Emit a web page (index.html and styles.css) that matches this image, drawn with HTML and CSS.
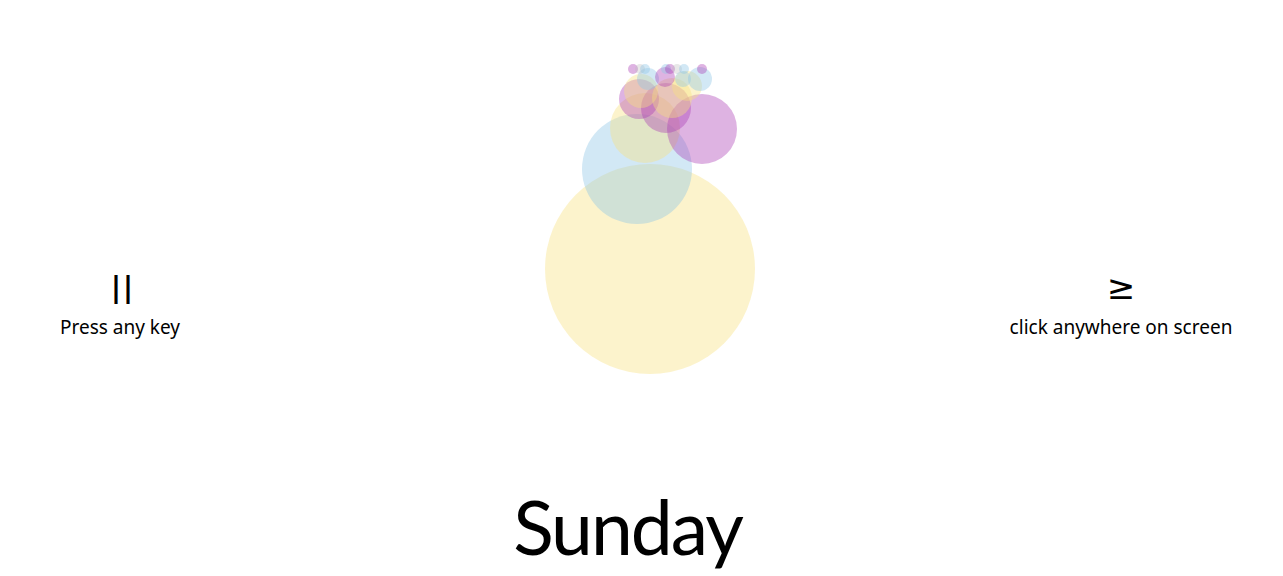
FILE: index.html
```html
<!DOCTYPE html>
<html>
<head>
<meta charset="utf-8">
<link rel="stylesheet" href="styles.css">
</head>
<body>
<main class="page">
  <section class="stage">
    <div class="side side-left">
      <div class="glyph pause">||</div>
      <div class="hint">Press any key</div>
    </div>
    <div class="canvas">
      <svg class="bubbles" viewBox="240 0 719 470" width="719" height="470" xmlns="http://www.w3.org/2000/svg">
        <g class="y"><circle cx="650" cy="269" r="105"/></g>
        <g class="b"><circle cx="637" cy="169" r="55"/></g>
        <g class="y"><circle cx="645" cy="128" r="35"/></g>
        <g class="p"><circle cx="702" cy="129" r="35"/></g>
        <g class="p"><circle cx="639" cy="99" r="20"/></g>
        <g class="p"><circle cx="666" cy="108" r="25"/></g>
        <g class="y"><circle cx="641" cy="91" r="17"/></g>
        <g class="y"><circle cx="672" cy="98" r="20"/></g>
        <g class="y"><circle cx="687" cy="86" r="15"/></g>
        <g class="b"><circle cx="700" cy="79" r="12"/></g>
        <g class="b"><circle cx="648" cy="79" r="11"/></g>
        <g class="p"><circle cx="665" cy="77" r="10"/></g>
        <g class="b"><circle cx="683" cy="79" r="8"/></g>
        <g class="p"><circle cx="633" cy="69" r="5"/></g>
        <g class="g"><circle cx="640" cy="69" r="5"/></g>
        <g class="b"><circle cx="645" cy="69" r="5"/></g>
        <g class="b"><circle cx="666" cy="69" r="5"/></g>
        <g class="p"><circle cx="670" cy="69" r="5"/></g>
        <g class="g"><circle cx="677" cy="69" r="5"/></g>
        <g class="b"><circle cx="684" cy="69" r="5"/></g>
        <g class="p"><circle cx="702" cy="69" r="5"/></g>
      </svg>
    </div>
    <div class="side side-right">
      <div class="glyph next">≥</div>
      <div class="hint">click anywhere on screen</div>
    </div>
  </section>
  <h1 class="day">Sunday</h1>
</main>
</body>
</html>
```
FILE: styles.css
```css
html, body {
  margin: 0;
  padding: 0;
  background: #ffffff;
}
body {
  font-family: "Noto Sans", "DejaVu Sans", sans-serif;
  color: #000;
  width: 1283px;
  height: 576px;
  overflow: hidden;
}
.page {
  display: flex;
  flex-direction: column;
  height: 576px;
}
.stage {
  display: grid;
  grid-template-columns: 240px 719px 324px;
  height: 470px;
}
.side {
  display: flex;
  flex-direction: column;
  align-items: center;
  padding-top: 266px;
}
.glyph {
  height: 40px;
  line-height: 40px;
}
.pause {
  font-size: 29px;
  font-weight: 700;
  letter-spacing: -4px;
  color: #000;
}
.next {
  font-size: 34px;
  font-weight: 500;
}
.hint {
  font-size: 19px;
  line-height: 24px;
  margin-top: 9px;
}
.canvas {
  display: block;
}
.bubbles {
  display: block;
}
.y circle { fill: rgba(248, 225, 127, 0.4); }
.b circle { fill: rgba(142, 197, 230, 0.4); }
.p circle { fill: rgba(167, 55, 180, 0.38); }
.g circle { fill: rgba(190, 190, 190, 0.35); }
.day {
  margin: 0;
  text-align: center;
  font-family: "Lato", "Noto Sans", sans-serif;
  font-size: 75px;
  font-weight: 400;
  line-height: 100px;
  letter-spacing: -2px;
  padding-right: 28px;
  margin-top: 6px;
}
```
